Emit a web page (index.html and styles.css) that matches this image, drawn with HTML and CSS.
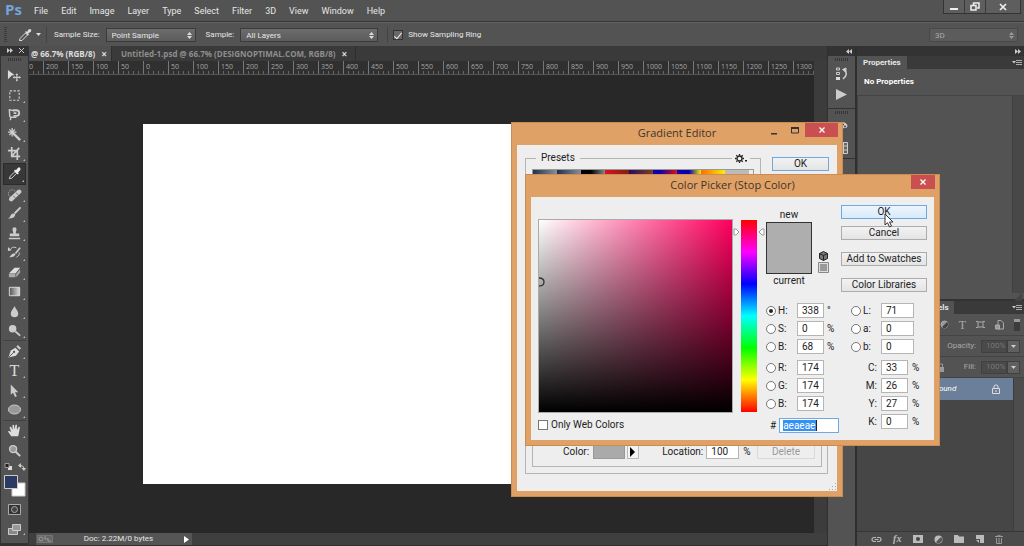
FILE: index.html
```
<!DOCTYPE html>
<html lang="en">
<head>
<meta charset="utf-8">
<title>Photoshop</title>
<link rel="stylesheet" href="styles.css">
</head>
<body>
<div class="app">
  <header class="menubar">
    <div class="logo">Ps</div>
    <nav class="menus">
      <button>File</button><button>Edit</button><button>Image</button><button>Layer</button><button>Type</button><button>Select</button><button>Filter</button><button>3D</button><button>View</button><button>Window</button><button>Help</button>
    </nav>
    <div class="winctl">
      <button aria-label="Minimize"><svg width="8" height="8"><path d="M0 5h8v2H0z" fill="#eee"/></svg></button>
      <button aria-label="Restore"><svg width="10" height="9" fill="none" stroke="#eee" stroke-width="1.5"><path d="M3.500 3V1H9v5H7"/><path d="M1 3.500h5V8H1z"/></svg></button>
      <button class="wide" aria-label="Close"><svg width="8" height="8" stroke="#eee" stroke-width="1.700"><path d="M1 1l6 6M7 1L1 7"/></svg></button>
    </div>
  </header>

  <div class="options">
    <i class="vgrip"></i>
    <svg class="opt-icon" width="14" height="14" viewBox="0 0 14 14"><path d="M1.500 12.500L2 10.500 7.500 5l2 2L4 12.500z" fill="none" stroke="#ddd"/><path d="M7 4l1-1 1 1 1.500-2.500Q12 .5 13 1.500t-.5 2.500L10 5.500l1 1-1 1z" fill="#ddd"/></svg>
    <svg class="opt-arrow" width="5" height="3"><path d="M0 0h5L2.500 3z" fill="#ddd"/></svg>
    <i class="vline"></i>
    <label for="ssize">Sample Size:</label>
    <span class="pick size"><select id="ssize"><option>Point Sample</option></select><svg width="5" height="7"><path d="M2.500 0L5 3H0zM0 4h5L2.500 7z" fill="#ddd"/></svg></span>
    <label for="slayer" class="second">Sample:</label>
    <span class="pick layers"><select id="slayer"><option>All Layers</option></select><svg width="5" height="7"><path d="M2.500 0L5 3H0zM0 4h5L2.500 7z" fill="#ddd"/></svg></span>
    <i class="vline"></i>
    <label class="ring"><input type="checkbox" checked>Show Sampling Ring</label>
    <span class="pick mode"><select aria-label="Workspace"><option>3D</option></select><svg width="5" height="7"><path d="M2.500 0L5 3H0zM0 4h5L2.500 7z" fill="#999"/></svg></span>
  </div>

  <main class="work">
    <aside class="tools">
      <div class="tools-head"><svg width="6" height="5" fill="#ccc"><path d="M0 0l3 2.500L0 5zM3 0l3 2.500L3 5z"/></svg><svg width="5" height="5" stroke="#ccc"><path d="M0 0l5 5M5 0L0 5"/></svg></div>
      <i class="hgrip"></i>
      <div class="group paint">
        <button aria-label="Move"><svg viewBox="0 0 16 16"><path d="M1 2l7 5.500-3 .5-4 4z" fill="#ddd"/><path d="M10.500 6.500v7M7 10h7" stroke="#ccc" stroke-width="1.200"/><path d="M9 7.500L10.500 5.500 12 7.500zM9 12.500l1.500 2 1.500-2zM8 8.500L6 10l2 1.500zM13 8.500l2 1.500-2 1.500z" fill="#ccc"/></svg></button>
        <button class="more" aria-label="Marquee"><svg viewBox="0 0 16 16"><path d="M3 3h10v10H3z" fill="none" stroke="#ccc" stroke-width="1.200" stroke-dasharray="2.500 1.500"/></svg></button>
        <button class="more" aria-label="Lasso"><svg viewBox="0 0 16 16" fill="none" stroke="#ccc" stroke-width="1.500"><path d="M3 13.500c2 0 0-2 1-3M3 10.500L2.500 3 8 4M4 11h6"/><path d="M6.500 3.500H10a3 3 0 010 6H7M7 6.500h3" stroke-width="2"/></svg></button>
        <button class="more" aria-label="Magic wand"><svg viewBox="0 0 16 16" stroke="#ccc"><path d="M7 7l7 7" stroke-width="2.500"/><path d="M5.500 1v9M1 5.500h9M2.500 2.500l6 6M8.500 2.500l-6 6" stroke-width="1.400"/></svg></button>
        <button class="more" aria-label="Crop"><svg viewBox="0 0 16 16" fill="none" stroke="#ccc" stroke-width="1.800"><path d="M5 1v10h9M1 5h10v10M5 11l8-9"/></svg></button>
        <button class="more on" aria-label="Eyedropper"><svg viewBox="0 0 16 16"><path d="M2.500 13.500l.8-2.500L8.500 6l1.800 1.800L5 13z" fill="none" stroke="#ddd"/><path d="M7.500 5l1.200-1.200.8.8L11.500 2q1.500-1.200 2.500 0t0 2.500L11.800 7l.8.800-1.200 1.200z" fill="#eee"/></svg></button>
        <button class="more" aria-label="Healing brush"><svg viewBox="0 0 16 16"><circle cx="5.500" cy="7" r="4" fill="none" stroke="#aaa" stroke-dasharray="1.500 1"/><path d="M4.500 13L13 5" stroke="#ccc" stroke-width="4.600" stroke-linecap="round"/><path d="M6.500 9.500l3 2.500M9.500 6l3 3" stroke="#777"/></svg></button>
        <button class="more" aria-label="Brush"><svg viewBox="0 0 16 16"><path d="M14.500 1.500L8 8" stroke="#ccc" stroke-width="2"/><path d="M8.500 8.500c1 3-3 5.500-7.500 4.500 3 0 2-4 5-5z" fill="#ccc"/></svg></button>
        <button class="more" aria-label="Stamp"><svg viewBox="0 0 16 16" fill="#ccc"><path d="M6.800 8L6 4.500a2.200 2.200 0 114 0L9.200 8H13v3H3V8zM2 12.500h12V14H2z"/></svg></button>
        <button class="more" aria-label="History brush"><svg viewBox="0 0 16 16"><path d="M14 3L9 9" stroke="#ccc" stroke-width="1.800"/><path d="M9 9c0 3-3 4.500-7 4 2-.5 2-3 4.500-4zM1 2l4 3.500-4 1z" fill="#ccc"/><path d="M4 4c2-2 4-2 6-1M13 8c1 2-1 4-3 5" fill="none" stroke="#ccc"/></svg></button>
        <button class="more" aria-label="Eraser"><svg viewBox="0 0 16 16"><path d="M2 9l6-6h6l-5 6z" fill="#ddd"/><path d="M2 9.500h7V13H2zM9.800 9.500L14 4.500V8L10 13z" fill="#aaa"/></svg></button>
        <button class="more" aria-label="Gradient"><svg viewBox="0 0 16 16"><defs><linearGradient id="tg"><stop stop-color="#555"/><stop offset="1" stop-color="#ddd"/></linearGradient></defs><path d="M2.500 3.500h11v9h-11z" fill="url(#tg)" stroke="#ddd"/></svg></button>
        <button class="more" aria-label="Blur"><svg viewBox="0 0 16 16"><path d="M8 2c1 3 4 5 4 8a4 4 0 01-8 0c0-3 3-5 4-8z" fill="#ccc"/></svg></button>
        <button class="more" aria-label="Dodge"><svg viewBox="0 0 16 16"><circle cx="6" cy="6" r="4" fill="#ccc"/><path d="M9 9l5 4.500" stroke="#ccc" stroke-width="2"/></svg></button>
      </div>
      <div class="group vector">
        <button class="more" aria-label="Pen"><svg viewBox="0 0 16 16"><path d="M1.500 14.500L4 7l5-3 4 4-3.500 4.500z" fill="#ddd"/><path d="M10 3l1.500-2L15 4.500 13.500 6z" fill="#ccc"/><path d="M2 14l5-5" stroke="#555"/><circle cx="7.500" cy="8.500" r="1.200" fill="#555"/></svg></button>
        <button class="more type" aria-label="Type">T</button>
        <button class="more" aria-label="Path selection"><svg viewBox="0 0 16 16"><path d="M4 1.500v11l2.500-2.200L8.500 15l2-1-2-4.200H12z" fill="#ccc"/></svg></button>
        <button class="more" aria-label="Ellipse"><svg viewBox="0 0 16 16"><ellipse cx="8" cy="8" rx="6.500" ry="4.800" fill="#999" stroke="#ccc"/></svg></button>
      </div>
      <div class="group view">
        <button class="more" aria-label="Hand"><svg viewBox="0 0 16 16"><path d="M4.500 14L1 9q1-1.500 3.500.8L2.800 5q0-1.500 1.500-1L6 7.500 5.800 2.500q.8-1.500 1.700 0L8 7l1-5q1-1 1.600.3L10.500 7.500 12.500 4q1.500-.5 1.200 1L12 14z" fill="#ddd"/></svg></button>
        <button aria-label="Zoom"><svg viewBox="0 0 16 16"><path d="M9 9l5 5" stroke="#ccc" stroke-width="2.200"/><circle cx="6.500" cy="6.500" r="3.800" fill="#999" stroke="#ccc" stroke-width="1.400"/></svg></button>
      </div>
      <div class="mini">
        <svg width="9" height="8"><path d="M4 3h4v4H4z" fill="#ddd"/><path d="M1 .5h4v4H1z" fill="#222" stroke="#999"/></svg>
        <svg width="8" height="8"><path d="M2 2.500q4 0 4 3" fill="none" stroke="#ccc"/><path d="M0 2.500L3 0v5zM3.500 5h4.500L6 8z" fill="#ccc"/></svg>
      </div>
      <svg class="fgbg" width="22" height="22" viewBox="0 0 22 22"><path d="M8 8h13v13H8z" fill="#fff" stroke="#ccc"/><path d="M.5.5h13v13H.5z" fill="#2a3a60" stroke="#ccc"/></svg>
      <button class="mode-btn" aria-label="Quick mask"><svg width="14" height="12"><path d="M.5.5h12v10H.5z" fill="#333" stroke="#aaa"/><circle cx="6.500" cy="5.500" r="3" fill="#444" stroke="#aaa"/></svg></button>
      <button class="mode-btn more" aria-label="Screen mode"><svg width="14" height="12"><path d="M.5 4.500h9v6h-9z" fill="#888" stroke="#ccc"/><path d="M4.500.5h8v6h-8z" fill="#999" stroke="#ccc"/></svg></button>
    </aside>

    <section class="doc">
      <div class="tabs">
        <div class="tab on">@ 66.7% (RGB/8)<button aria-label="Close tab">×</button></div>
        <div class="tab">Untitled-1.psd @ 66.7% (DESIGNOPTIMAL.COM, RGB/8)<button aria-label="Close tab">×</button></div>
      </div>
      <div class="stage">
        <div class="ruler"><span class="first">0</span><span>200</span><span>150</span><span>100</span><span>50</span><span>0</span><span>50</span><span>100</span><span>150</span><span>200</span><span>250</span><span>300</span><span>350</span><span>400</span><span>450</span><span>500</span><span>550</span><span>600</span><span>650</span><span>700</span><span>750</span><span>800</span><span>850</span><span>900</span><span>950</span><span>1000</span><span>1050</span><span>1100</span><span>1150</span><span>1200</span><span>1250</span><span>1300</span></div>
        <div class="canvas"><div class="paper"></div></div>
        <div class="vscroll"></div>
      </div>
      <footer class="status">
        <div class="info">
          <svg width="16" height="8" fill="none" stroke="#999"><path d="M.5.5h15v7H.5z" fill="#666" stroke="#777"/><circle cx="4" cy="4" r="2"/><path d="M8 1v3h3M11 3v3h3"/></svg>
          <span>Doc: 2.22M/0 bytes</span>
          <button aria-label="Status menu"><svg width="5" height="7"><path d="M0 0l5 3.500L0 7z" fill="#fff"/></svg></button>
        </div>
      </footer>
    </section>

    <aside class="strip">
      <div class="strip-head"><svg width="6" height="5" fill="#ccc"><path d="M3 0L0 2.500 3 5zM6 0L3 2.500 6 5z"/></svg></div>
      <div class="strip-group tall">
        <i class="hgrip"></i>
        <button aria-label="History"><svg width="14" height="14" fill="none" stroke="#ccc"><path d="M1.500 1h3v2h-3zM1.500 5.500h3v2h-3z"/><path d="M1 10h4v3H1z" fill="#ddd" stroke="none"/><path d="M7.500 2.500L11 1v4z" fill="#ccc"/><path d="M9 3q5 4-1 9" stroke-width="1.600"/></svg></button>
        <button aria-label="Actions"><svg width="13" height="11"><path d="M1 0l11 5.500L1 11z" fill="#ccc"/></svg></button>
      </div>
      <div class="strip-group">
        <i class="hgrip"></i>
        <button aria-label="Color"><svg width="13" height="12"><path d="M6 1c8 0 8 7 3 6-2 0 0 4-4 4-6-1-6-9 1-10z" fill="#ccc"/><g fill="#444"><circle cx="4" cy="4" r="1"/><circle cx="8" cy="3.500" r="1"/><circle cx="10" cy="5.500" r="1"/></g></svg></button>
        <button aria-label="Swatches"><svg width="13" height="12" fill="#666" stroke="#ccc"><path d="M.5.5h12v11H.5zM.5 4h12M.5 8h12M4.500 0v12M8.500 0v12"/></svg></button>
      </div>
    </aside>

    <aside class="panels">
      <div class="panels-head"><svg width="6" height="5" fill="#ccc"><path d="M0 0l3 2.500L0 5zM3 0l3 2.500L3 5z"/></svg></div>
      <section class="props">
        <div class="ptabs"><h2>Properties</h2><svg width="10" height="7"><path d="M0 2h4L2 4.500z" fill="#ccc"/><path d="M4 1.500h6M4 3.500h6M4 5.500h6" stroke="#aaa"/></svg></div>
        <p>No Properties</p>
        <div class="pbody"><div></div><i></i></div>
        <div class="pfoot"><svg width="8" height="8"><path d="M8 0v8H0z" fill="#444"/></svg></div>
      </section>
      <section class="layer-panel">
        <div class="ptabs"><h2>Channels</h2><svg width="10" height="7"><path d="M0 2h4L2 4.500z" fill="#ccc"/><path d="M4 1.500h6M4 3.500h6M4 5.500h6" stroke="#aaa"/></svg></div>
        <div class="lrow filter">
          <svg width="9" height="9"><circle cx="4.500" cy="4.500" r="3.500" fill="#999" stroke="#aaa"/><path d="M7 2L2 7a3.500 3.500 0 005-5z" fill="#444"/></svg>
          <b>T</b>
          <svg width="9" height="9" fill="none" stroke="#aaa"><path d="M2 2h5v5H2zM0 1.500h2M7 1.500h2M0 7.500h2M7 7.500h2"/></svg>
          <svg width="9" height="10" fill="none" stroke="#aaa"><path d="M3 .5h3L8.500 3v6H3z"/><path d="M.5 5h4v4h-4z" fill="#999"/></svg>
          <i></i>
        </div>
        <div class="lrow"><label for="op">Opacity:</label><input id="op" value="100%" disabled><button aria-label="Opacity menu"><svg width="5" height="3"><path d="M0 0h5L2.500 3z" fill="#ccc"/></svg></button></div>
        <div class="lrow"><svg class="lk" width="7" height="9"><path d="M0 4h7v5H0z" fill="#999"/><path d="M1.500 4V1h4v3" fill="none" stroke="#999"/></svg><label for="fi">Fill:</label><input id="fi" value="100%" disabled><button aria-label="Fill menu"><svg width="5" height="3"><path d="M0 0h5L2.500 3z" fill="#ccc"/></svg></button></div>
        <div class="llist">
          <div class="litems"><div class="layer"><em>Background</em><svg width="8" height="10"><path d="M.5 4.500h7v5h-7z" fill="#6b7f9b" stroke="#ddd"/><path d="M2 4V2q2-2.500 4 0v2M3 7h2" fill="none" stroke="#ddd"/></svg></div></div>
          <i></i>
        </div>
        <footer class="lfoot">
          <svg width="11" height="9" fill="none" stroke="#bbb" stroke-width="1.200"><path d="M5 2.500H3a2 2 0 000 4h2M6 2.500h2a2 2 0 010 4H6M3.500 4.500h4"/></svg>
          <em>fx</em>
          <svg width="10" height="8"><path d="M0 0h10v8H0z" fill="#bbb"/><circle cx="5" cy="4" r="2" fill="#444"/></svg>
          <svg width="9" height="9"><circle cx="4.500" cy="4.500" r="4" fill="#bbb"/><path d="M7 2L2 7a3.500 3.500 0 005-5z" fill="#555"/></svg>
          <svg width="10" height="8"><path d="M0 0h4l1 1.500h5V8H0z" fill="#bbb"/></svg>
          <svg width="9" height="9"><path d="M1 0h8v8H5V4H1z" fill="#bbb"/><path d="M1 5h3v3z" fill="#bbb"/></svg>
          <svg width="8" height="9" fill="none" stroke="#999"><path d="M0 1.500h8M3 1V0h2v1M1.500 3v5.500h5V3M4 3v5"/></svg>
        </footer>
      </section>
    </aside>
  </main>

  <section class="dialog grad" role="dialog" aria-label="Gradient Editor">
    <header><h1>Gradient Editor</h1><div class="dctl"><button aria-label="Minimize"><svg width="6" height="10"><path d="M0 8h6v1.500H0z" fill="#333"/></svg></button><button aria-label="Maximize"><svg width="8" height="7"><path d="M.5 1h7v5h-7z" fill="none" stroke="#333"/><path d="M0 0h8v2H0z" fill="#333"/></svg></button><button class="x" aria-label="Close"><svg width="6" height="6" stroke="#fff" stroke-width="1.300"><path d="M.5.5l5 5M5.500.5l-5 5"/></svg></button></div></header>
    <div class="gbody">
      <div class="gtop">
        <fieldset><legend>Presets</legend><button class="gear" aria-label="Preset menu"><svg width="12" height="9"><circle cx="4.500" cy="4.500" r="2.500" fill="none" stroke="#222" stroke-width="1.300"/><path d="M4.500 0v1.500M4.500 7.500V9M0 4.500h1.500M7.500 4.500H9M1.300 1.300l1 1M6.700 6.700l1 1M7.700 1.300l-1 1M1.300 7.700l1-1" stroke="#222" stroke-width="1.300"/><path d="M10 6h2v1.500h-2z" fill="#222"/></svg></button>
          <div class="presets"><i class="p1"></i><i class="p1"></i><i class="p2"></i><i class="p3"></i><i class="p4"></i><i class="p5"></i><i class="p6"></i><i class="p7"></i><i class="p8"></i></div>
        </fieldset>
        <button class="btn blue">OK</button>
      </div>
      <div class="gbottom"><div class="ginner">
        <span>Color:</span><i class="chip"></i><button class="go" aria-label="Color options"><svg width="6" height="10"><path d="M0 0l5 5-5 5z" fill="#000"/></svg></button>
        <label for="loc">Location:</label><input id="loc" class="num" value="100"><span class="pct">%</span><button class="btn" disabled>Delete</button>
      </div></div>
      <svg class="resize" width="8" height="8" fill="#aaa"><path d="M6 0h1v1H6zM3 3h1v1H3zM6 3h1v1H6zM0 6h1v1H0zM3 6h1v1H3zM6 6h1v1H6z"/></svg>
    </div>
  </section>

  <section class="dialog picker" role="dialog" aria-label="Color Picker (Stop Color)">
    <header><h1>Color Picker (Stop Color)</h1><div class="dctl"><button class="x" aria-label="Close"><svg width="6" height="6" stroke="#fff" stroke-width="1.300"><path d="M.5.5l5 5M5.500.5l-5 5"/></svg></button></div></header>
    <div class="pkbody">
      <div class="field-col">
        <div class="sv"><svg width="6" height="10"><path d="M0 1q5 0 5 4T0 9" fill="none" stroke="#333" stroke-width="1.300"/></svg></div>
        <label class="web"><input type="checkbox">Only Web Colors</label>
      </div>
      <div class="hue">
        <svg width="7" height="8" fill="#fff" stroke="#999"><path d="M1 1h2l3 3-3 3H1z"/></svg>
        <div class="bar"></div>
        <svg width="7" height="8" fill="#fff" stroke="#999"><path d="M6 1H4L1 4l3 3h2z"/></svg>
      </div>
      <div class="side">
        <div class="upper">
          <div class="compare"><span>new</span><div class="now"></div><span>current</span></div>
          <div class="warn">
            <svg width="9" height="10"><path d="M4.500.5l4 2v5l-4 2-4-2v-5z" fill="#777" stroke="#222"/><path d="M.5 2.500l4 2 4-2M4.500 4.500v5" stroke="#222" fill="none"/></svg>
            <svg width="11" height="11"><path d="M.5.5h10v10H.5z" fill="#ddd" stroke="#888"/><path d="M2 2h7v7H2z" fill="#999"/></svg>
          </div>
          <div class="actions"><button class="btn blue hot">OK</button><button class="btn">Cancel</button><button class="btn gap">Add to Swatches</button><button class="btn gap">Color Libraries</button></div>
        </div>
        <div class="fields">
          <div class="col">
            <div class="f"><input type="radio" name="ch" id="rh" checked><label for="rh">H:</label><input class="num" aria-label="Hue" value="338"><span>°</span></div>
            <div class="f"><input type="radio" name="ch" id="rs"><label for="rs">S:</label><input class="num" aria-label="Saturation" value="0"><span>%</span></div>
            <div class="f"><input type="radio" name="ch" id="rb"><label for="rb">B:</label><input class="num" aria-label="Brightness" value="68"><span>%</span></div>
            <div class="f split"><input type="radio" name="ch" id="rr"><label for="rr">R:</label><input class="num" aria-label="Red" value="174"></div>
            <div class="f"><input type="radio" name="ch" id="rg"><label for="rg">G:</label><input class="num" aria-label="Green" value="174"></div>
            <div class="f"><input type="radio" name="ch" id="rbl"><label for="rbl">B:</label><input class="num" aria-label="Blue" value="174"></div>
            <div class="hex"><label for="hex">#</label><div class="hexbox"><input id="hex" value="aeaeae" size="6"></div></div>
          </div>
          <div class="col right">
            <div class="f wide"><input type="radio" name="ch" id="rl"><label for="rl">L:</label><input class="num" aria-label="Lightness" value="71"></div>
            <div class="f wide"><input type="radio" name="ch" id="ra"><label for="ra">a:</label><input class="num" aria-label="a channel" value="0"></div>
            <div class="f wide"><input type="radio" name="ch" id="rb2"><label for="rb2">b:</label><input class="num" aria-label="b channel" value="0"></div>
            <div class="f cmyk split"><label for="c">C:</label><input class="num" id="c" value="33"><span>%</span></div>
            <div class="f cmyk"><label for="m">M:</label><input class="num" id="m" value="26"><span>%</span></div>
            <div class="f cmyk"><label for="y">Y:</label><input class="num" id="y" value="27"><span>%</span></div>
            <div class="f cmyk"><label for="k">K:</label><input class="num" id="k" value="0"><span>%</span></div>
          </div>
        </div>
      </div>
    </div>
    <svg class="cursor" width="10" height="16"><path d="M1 1v11l2.500-2.300L5.500 14l2-1-2-4H9z" fill="#fff" stroke="#333"/></svg>
  </section>
</div>
</body>
</html>
```

FILE: styles.css
```
* { box-sizing: border-box; margin: 0; padding: 0; }
body { font: 10px/14px Roboto, "Open Sans", sans-serif; background: #282828; overflow: hidden; }
button, input, select { font: inherit; color: inherit; background: none; border: 0; border-radius: 0; appearance: none; outline: 0; }
button { display: flex; align-items: center; justify-content: center; }
svg { display: block; flex: none; }
i { display: block; flex: none; }

.app { position: relative; display: flex; flex-direction: column; height: 100vh; color: #e6e6e6; }

.menubar { display: flex; height: 22px; padding-left: 5px; background: #535353; border-bottom: 1px solid #383838; }
.logo { width: 29px; font: bold 15px/19px "Open Sans", sans-serif; color: #75a5d8; }
.menus { display: flex; gap: 13px; flex: 1; font: 9px/20px Roboto, sans-serif; }
.winctl { display: flex; height: 14px; margin-right: 3px; border: 1px solid #333; border-top: 0; background: #5e5e5e; }
.winctl button { width: 21px; border-right: 1px solid #3a3a3a; }
.winctl .wide { width: 34px; border: 0; }

.options { display: flex; align-items: center; height: 24px; padding: 0 6px 0 4px; background: #535353; border-top: 1px solid #606060; font-size: 8px; }
.vgrip { width: 3px; height: 16px; background: repeating-linear-gradient(#3c3c3c 0 1px, transparent 1px 2px); }
.opt-icon { margin-left: 11px; }
.opt-arrow { margin: 0 4px; }
.vline { width: 1px; height: 16px; background: #444; margin: 0 7px 0 1px; }
.pick { position: relative; display: flex; height: 14px; margin-left: 6px; border: 1px solid #3b3b3b; background: linear-gradient(#6c6c6c, #5c5c5c); }
.pick select { width: 100%; padding-left: 5px; }
.pick svg { position: absolute; right: 3px; top: 3px; }
.pick.size { width: 90px; }
.pick.layers { width: 138px; }
.second { margin-left: 10px; }
.layers + .vline { margin-left: 9px; margin-right: 5px; }
.ring { display: flex; align-items: center; gap: 5px; }
.ring input { display: grid; place-items: center; width: 10px; height: 10px; border: 1px solid #333; background: #686868; }
.ring input:checked::after { content: ""; width: 3px; height: 7px; border: solid #eee; border-width: 0 1px 1px 0; transform: rotate(40deg); }
.pick.mode { width: 89px; margin-left: auto; color: #aaa; border-color: #484848; background: #5c5c5c; }

.work { display: flex; flex: 1; min-height: 0; }

.tools { width: 29px; display: flex; flex-direction: column; align-items: center; background: #535353; border: solid #333; border-width: 0 1px 3px; }
.tools-head { display: flex; align-items: center; justify-content: space-between; align-self: stretch; height: 10px; padding: 0 4px 0 6px; background: #333; }
.hgrip { width: 14px; height: 3px; margin: 2px auto; background: repeating-linear-gradient(90deg, #363636 0 1px, transparent 1px 2px); }
.group { display: flex; flex-direction: column; width: 23px; border-bottom: 1px solid #414141; }
.group button { position: relative; flex: 1; min-height: 0; }
.group svg { width: 15px; height: 15px; }
.group .on { background: #383838; border: 1px solid #2b2b2b; }
.paint { height: 281px; padding-top: 3px; }
.vector { height: 80px; }
.view { height: 40px; border: 0; }
.more::after { content: ""; position: absolute; right: 1px; bottom: 2px; border: solid transparent; border-width: 2px 0 0 2px; border-right: 2px solid #bbb; border-left: 0; }
.group .type { font: 16px/18px "Liberation Serif", serif; color: #ddd; }
.mini { display: flex; gap: 5px; margin: 3px 0 4px; }
.fgbg { margin-bottom: 6px; }
.mode-btn { position: relative; width: 23px; height: 14px; margin-bottom: 6px; }

.doc { flex: 1; min-width: 0; display: flex; flex-direction: column; }
.tabs { display: flex; height: 15px; background: #3a3a3a; font: bold 8px/16px "Open Sans", sans-serif; }
.tab { display: flex; gap: 6px; padding: 0 8px 0 9px; color: #8e8e8e; white-space: nowrap; border-right: 1px solid #2e2e2e; }
.tab.on { padding: 0 4px 0 2px; color: #ddd; background: #505050; }
.tab button { font-size: 10px; color: #ddd; }
.stage { flex: 1; min-height: 0; display: grid; grid-template: 14px 1fr / 1fr 13px; }
.ruler { display: flex; overflow: hidden; background: repeating-linear-gradient(90deg, transparent 0 4px, #666 4px 5px) 0 10px / 100% 3px no-repeat #303030; border-bottom: 1px solid #555; color: #a5a5a5; font: 7px/11px "Open Sans", sans-serif; }
.ruler span { flex: none; width: 25px; padding-left: 2px; border-left: 1px solid #777; }
.ruler .first { width: 14px; padding: 0; border: 0; }
.canvas { grid-column: 1; overflow: hidden; padding: 49px 0 0 114px; background: #282828; }
.paper { width: 640px; height: 360px; background: #fff; }
.vscroll { grid-area: 1 / 2 / 3 / 3; background: #3c3c3c; }
.status { height: 13px; background: #3f3f3f; font-size: 8px; border-bottom: 1px solid #2e2e2e; }
.info { display: flex; align-items: center; justify-content: space-between; width: 156px; height: 12px; margin-left: 7px; padding: 0 3px 0 1px; background: #555; }

.strip { width: 29px; background: #535353; border: solid #2f2f2f; border-width: 0 1px; }
.strip-head, .panels-head { display: flex; align-items: center; justify-content: flex-end; height: 10px; padding-right: 3px; background: #333; }
.strip-group { border-bottom: 1px solid #333; }
.strip-group button { width: 100%; height: 21px; }
.tall { height: 51px; }

.panels { width: 168px; display: flex; flex-direction: column; background: #535353; border-left: 1px solid #2f2f2f; font-size: 8px; }
.ptabs { display: flex; align-items: center; justify-content: space-between; height: 13px; padding-right: 2px; background: #3a3a3a; }
.ptabs h2 { padding: 0 6px; font-size: 8px; line-height: 13px; background: #535353; }
.props p { padding: 6px 7px; font-weight: bold; font-size: 8px; color: #fff; height: 26px; }
.pbody { display: flex; height: 198px; border-top: 1px solid #444; }
.pbody div { flex: 1; border-left: 1px solid #444; }
.pbody i { width: 12px; background: #484848; border-left: 1px solid #404040; }
.pfoot { display: flex; justify-content: flex-end; padding: 0 2px; height: 8px; border-bottom: 2px solid #333; }
.layer-panel { flex: 1; display: flex; flex-direction: column; }
.layer-panel .ptabs h2 { padding-left: 58px; padding-right: 5px; }
.lrow { display: flex; align-items: center; justify-content: flex-end; height: 21px; padding-right: 4px; color: #aaa; border-bottom: 1px solid #444; }
.lrow input { width: 26px; height: 13px; margin-left: 5px; padding-left: 4px; background: #4a4a4a; border: 1px solid #404040; color: #777; }
.lrow button { width: 13px; height: 13px; background: #606060; border: 1px solid #404040; }
.filter { gap: 10px; height: 22px; }
.filter b { font: 12px/14px "Liberation Serif", serif; }
.filter i { width: 6px; height: 12px; background: linear-gradient(#999 0 3px, #3c3c3c 3px); }
.lk { margin-right: 20px; }
.llist { flex: 1; display: flex; background: #464646; }
.litems { flex: 1; }
.llist > i { width: 11px; background: #4d4d4d; border-left: 1px solid #3c3c3c; }
.layer { display: flex; align-items: center; justify-content: space-between; height: 22px; padding: 0 13px 0 58px; background: #6b7f9b; color: #fff; }
.lfoot { display: flex; align-items: center; justify-content: space-between; height: 15px; padding: 0 21px 0 14px; background: #4b4b4b; border-top: 1px solid #363636; }
.lfoot em { font: italic bold 10px/12px "Liberation Serif", serif; color: #bbb; }

.dialog { position: absolute; display: flex; flex-direction: column; background: #e0a166; border: 1px solid #c98d53; color: #222; padding: 0 5px 5px; }
.dialog header { position: relative; height: 22px; }
.dialog h1 { text-align: center; font: 11px/20px "Open Sans", sans-serif; color: #3f352b; }
.dctl { position: absolute; top: 0; right: -1px; display: flex; height: 14px; }
.dctl button { width: 21px; }
.dctl .x { background: #c94f50; }
.btn { height: 14px; line-height: 12px; border: 1px solid #acacac; background: linear-gradient(#f2f2f2, #e4e4e4); white-space: nowrap; }
.btn.blue { border-color: #6ea9e6; }
.btn.hot { background: linear-gradient(#ecf5fd, #d8eafb); }
.btn:disabled { color: #9a9a9a; border-color: #d9d9d9; background: #eee; }
.num { width: 27px; height: 15px; padding-left: 4px; background: #fff; border: 1px solid #b5b5b5; }

.grad { left: 511px; top: 122px; width: 332px; height: 375px; }
.grad .x { width: 33px; }
.gbody { position: relative; flex: 1; display: flex; flex-direction: column; justify-content: space-between; padding: 6px 8px 17px; background: #eee; }
.gtop { display: flex; justify-content: space-between; align-items: flex-start; }
.gtop .btn { width: 57px; margin-top: 6px; }
fieldset { position: relative; width: 236px; height: 120px; border: 1px solid #b4b4b4; padding: 4px 6px; }
legend { margin-left: 4px; padding: 0 5px; }
.gear { position: absolute; top: -11px; right: 10px; padding: 0 3px; background: #eee; }
.presets { display: flex; height: 80px; border: 1px solid #999; background: #eee; }
.presets i { width: 24px; height: 20px; }
.p1 { background: linear-gradient(90deg, #223050, #8a8f98); }
.p2 { background: linear-gradient(90deg, #000 40%, #888); }
.p3 { background: linear-gradient(90deg, #e01020, #802010); }
.p4 { background: linear-gradient(90deg, #2a0a60, #804020); }
.p5 { background: linear-gradient(90deg, #0a00b0 30%, #e01010); }
.p6 { background: linear-gradient(90deg, #0a00b0 50%, #f0f000); }
.p7 { background: linear-gradient(90deg, #ff6a00, #f8f000); }
.p8 { background: #bbb; }
.gbottom { width: 303px; height: 110px; padding: 0 5px 6px 6px; border: 1px solid #b4b4b4; }
.ginner { display: flex; align-items: flex-end; height: 100%; padding: 0 6px 7px 30px; border: 1px solid #b4b4b4; }
.chip { width: 32px; height: 15px; margin-left: 4px; background: #aaa; border: 1px solid #999; }
.go { width: 12px; height: 15px; margin: 0 23px 0 2px; border: 1px solid #bbb; background: #f4f4f4; }
.ginner .num { width: 33px; margin-left: 3px; }
.pct { margin-left: 4px; }
.ginner .btn { width: 58px; margin-left: auto; }
.resize { position: absolute; right: 0; bottom: 0; }

.picker { left: 525px; top: 174px; width: 415px; height: 272px; }
.picker .x { width: 24px; }
.pkbody { flex: 1; display: flex; padding: 0 7px; background: #eee; }
.field-col { width: 195px; padding-top: 22px; }
.sv { height: 194px; padding-top: 57px; border: 1px solid #aaa; background: linear-gradient(transparent, #000), linear-gradient(90deg, #fff, #ff005e); }
.web { display: flex; align-items: center; gap: 3px; margin-top: 5px; }
.web input { width: 10px; height: 10px; border: 1px solid #777; background: #fff; }
.hue { display: flex; width: 33px; padding-top: 23px; gap: 1px; }
.hue svg { margin-top: 8px; }
.bar { width: 16px; height: 192px; background: linear-gradient(#f00, #f0f, #00f, #0ff, #0f0, #ff0, #f00); }
.side { flex: 1; display: flex; flex-direction: column; padding-top: 8px; }
.upper { display: flex; height: 88px; }
.compare { display: flex; flex-direction: column; align-items: center; width: 46px; padding-top: 3px; }
.now { width: 46px; height: 52px; background: #aeaeae; border: 1px solid #333; }
.warn { display: flex; flex-direction: column; align-items: center; gap: 1px; margin: 46px 0 0 6px; }
.actions { display: flex; flex-direction: column; gap: 7px; width: 86px; margin-left: auto; }
.actions .gap { margin-top: 5px; }
.fields { display: flex; justify-content: space-between; margin-top: 10px; }
.col { display: flex; flex-direction: column; gap: 3px; width: 74px; }
.col.right { width: 76px; }
.f { display: grid; grid-template-columns: 12px 19px 27px 1fr; height: 15px; align-items: center; }
.f.wide { grid-template-columns: 12px 18px 33px; }
.f.cmyk { grid-template-columns: 26px 27px 1fr; column-gap: 4px; }
.cmyk label { text-align: right; }
.f span { padding-left: 3px; }
.cmyk span { padding: 0; }
.wide .num { width: 33px; }
.split { margin-top: 3px; }
.f input[type="radio"] { display: grid; place-items: center; width: 10px; height: 10px; border: 1px solid #777; border-radius: 50%; background: #fff; }
.f input[type="radio"]:checked::after { content: ""; width: 4px; height: 4px; border-radius: 50%; background: #222; }
.hex { display: flex; align-items: center; gap: 3px; margin-top: 4px; padding-left: 4px; }
.hexbox { flex: none; width: 60px; height: 15px; padding: 1px 3px; background: #fff; border: 1px solid #6ea9e6; }
.hexbox input { display: block; width: 34px; height: 11px; line-height: 11px; color: #fff; background: #3390f5; border-right: 1px solid #222; }
.cursor { position: absolute; left: 358px; top: 38px; }
```
